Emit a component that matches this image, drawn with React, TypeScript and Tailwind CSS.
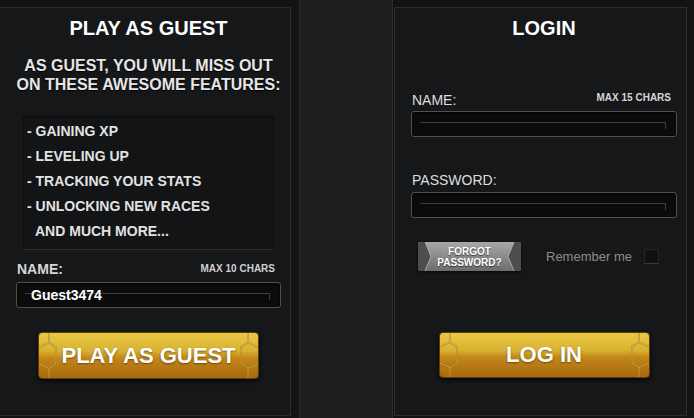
import React from "react";

const FEATURES = [
  "- GAINING XP",
  "- LEVELING UP",
  "- TRACKING YOUR STATS",
  "- UNLOCKING NEW RACES",
];

function HexEnd({ right = false }: { right?: boolean }) {
  const d = "M10 0 V10 L17 15 V32 L10 37 V47 M10 10 L0 15 M10 37 L0 32";
  return (
    <svg
      viewBox="0 0 24 47"
      preserveAspectRatio="none"
      className={`absolute top-0 h-full w-[24px] ${right ? "right-0 -scale-x-100" : "left-0"}`}
    >
      <path d={d} fill="none" stroke="#6e4808" strokeWidth="1.8" strokeOpacity="0.45" />
      <path d={d} fill="none" stroke="#f3d36a" strokeWidth="1" strokeOpacity="0.65" />
    </svg>
  );
}

function GoldButton({ label, width }: { label: string; width: string }) {
  return (
    <button
      className={`relative ${width} mx-auto flex items-center justify-center rounded-[4px] border border-[#5e4006] bg-[linear-gradient(to_bottom,#e8c843_0%,#d9b132_40%,#cd9a22_48%,#c2861a_56%,#a8680d_100%)] shadow-[0_2px_4px_rgba(0,0,0,0.8)]`}
    >
      <HexEnd />
      <HexEnd right />
      <span className="relative text-[22px] font-bold leading-none text-white [text-shadow:0_1px_2px_rgba(0,0,0,0.45)]">
        {label}
      </span>
    </button>
  );
}

function TextBox({ value }: { value?: string }) {
  return (
    <div className="relative h-[26px] rounded-[3px] border border-[#505052] bg-[#0b0b0c] shadow-[inset_0_1px_3px_rgba(0,0,0,0.9)]">
      <div className="absolute left-[8px] right-[10px] top-[10px] h-[7px] border-t border-r border-[#3e3e40]" />
      {value && (
        <span className="absolute left-[14px] top-[4px] text-[14px] font-bold leading-[16px] text-white">
          {value}
        </span>
      )}
    </div>
  );
}

function ForgotButton() {
  return (
    <button className="relative h-[29px] w-[103px] overflow-hidden rounded-[2px] bg-[linear-gradient(to_bottom,#a8a8a8_0%,#8a8a8a_50%,#6c6c6c_100%)] shadow-[0_1px_3px_rgba(0,0,0,0.8)]">
      <svg viewBox="0 0 103 29" className="absolute inset-0 h-full w-full">
        <polygon points="0,0 7,0 13,14.5 7,29 0,29" fill="#4e4e4e" />
        <polygon points="103,0 96,0 90,14.5 96,29 103,29" fill="#4e4e4e" />
        <path d="M7 0 L13 14.5 L7 29 M96 0 L90 14.5 L96 29" fill="none" stroke="#c4c4c4" strokeWidth="1" strokeOpacity="0.7" />
      </svg>
      <span className="relative block text-[10px] font-bold leading-[11px] text-white [text-shadow:0_1px_1px_rgba(0,0,0,0.6)]">
        FORGOT
        <br />
        PASSWORD?
      </span>
    </button>
  );
}

export default function App() {
  return (
    <div className="flex h-[418px] w-[694px] overflow-hidden bg-[#1e1e20] font-['Liberation_Sans',Arial,sans-serif]">
      {/* guest column */}
      <div className="w-[300px] shrink-0 border-r border-[#2c2c2e] bg-[#121315]">
        <div className="mt-[7px] h-[409px] w-[291px] border-y border-r border-[#2b2c2e] bg-[#161719] pl-[7px]">
          <h2 className="pt-[8px] text-center text-[20px] font-bold leading-[24px] text-white">
            PLAY AS GUEST
          </h2>
          <p className="mt-[16px] text-center text-[16px] font-bold leading-[19px] text-[#e6e6e6] [text-shadow:0_1px_1px_#000]">
            AS GUEST, YOU WILL MISS OUT
            <br />
            ON THESE AWESOME FEATURES:
          </p>

          <div className="mx-[16px] mt-[22px] h-[134px] border border-[#0d0d0e] border-b-[#2a2a2c] bg-[#131416] pl-[3px] pt-[2px]">
            {FEATURES.map((f) => (
              <div key={f} className="text-[14px] font-bold leading-[25px] text-[#e2e2e2]">
                {f}
              </div>
            ))}
            <div className="pl-[8px] text-[14px] font-bold leading-[25px] text-[#e2e2e2]">
              AND MUCH MORE...
            </div>
          </div>

          <div className="mx-[9px] mt-[11px]">
            <div className="flex items-center justify-between pl-[1px] pr-[6px]">
              <span className="text-[14px] font-bold leading-[16px] text-[#d6d6d6]">NAME:</span>
              <span className="text-[10px] font-bold leading-[16px] text-[#cfcfcf]">MAX 10 CHARS</span>
            </div>
            <div className="mt-[5px]">
              <TextBox value="Guest3474" />
            </div>
          </div>

          <div className="mt-[24px]">
            <GoldButton label="PLAY AS GUEST" width="w-[221px] h-[47px]" />
          </div>
        </div>
      </div>

      <div className="flex-1" />

      {/* login column */}
      <div className="w-[302px] shrink-0 border-l border-[#2c2c2e] bg-[#121315] pl-[1px]">
        <div className="mt-[7px] h-[409px] w-[293px] border border-[#2b2c2e] bg-[#161719] pl-[7px]">
          <h2 className="pt-[8px] text-center text-[20px] font-bold leading-[24px] text-white">
            LOGIN
          </h2>

          <div className="ml-[9px] mr-[9px] mt-[52px]">
            <div className="flex items-center justify-between pl-[1px] pr-[6px]">
              <span className="text-[14px] leading-[16px] text-[#dedede]">NAME:</span>
              <span className="-translate-y-[2px] text-[10px] font-bold leading-[16px] text-[#d6d6d6]">
                MAX 15 CHARS
              </span>
            </div>
            <div className="mt-[3px]">
              <TextBox />
            </div>

            <div className="mt-[35px] pl-[1px] text-[14px] leading-[16px] text-[#dedede]">PASSWORD:</div>
            <div className="mt-[4px]">
              <TextBox />
            </div>

            <div className="mt-[24px] flex items-center pl-[7px]">
              <ForgotButton />
              <span className="ml-[25px] text-[13px] leading-[16px] text-[#8c8c8c]">Remember me</span>
              <span className="ml-[12px] h-[15px] w-[15px] border border-[#262628] border-b-[#3a3a3c] bg-[#111113]" />
            </div>
          </div>

          <div className="mt-[61px]">
            <GoldButton label="LOG IN" width="w-[211px] h-[46px]" />
          </div>
        </div>
      </div>
    </div>
  );
}
